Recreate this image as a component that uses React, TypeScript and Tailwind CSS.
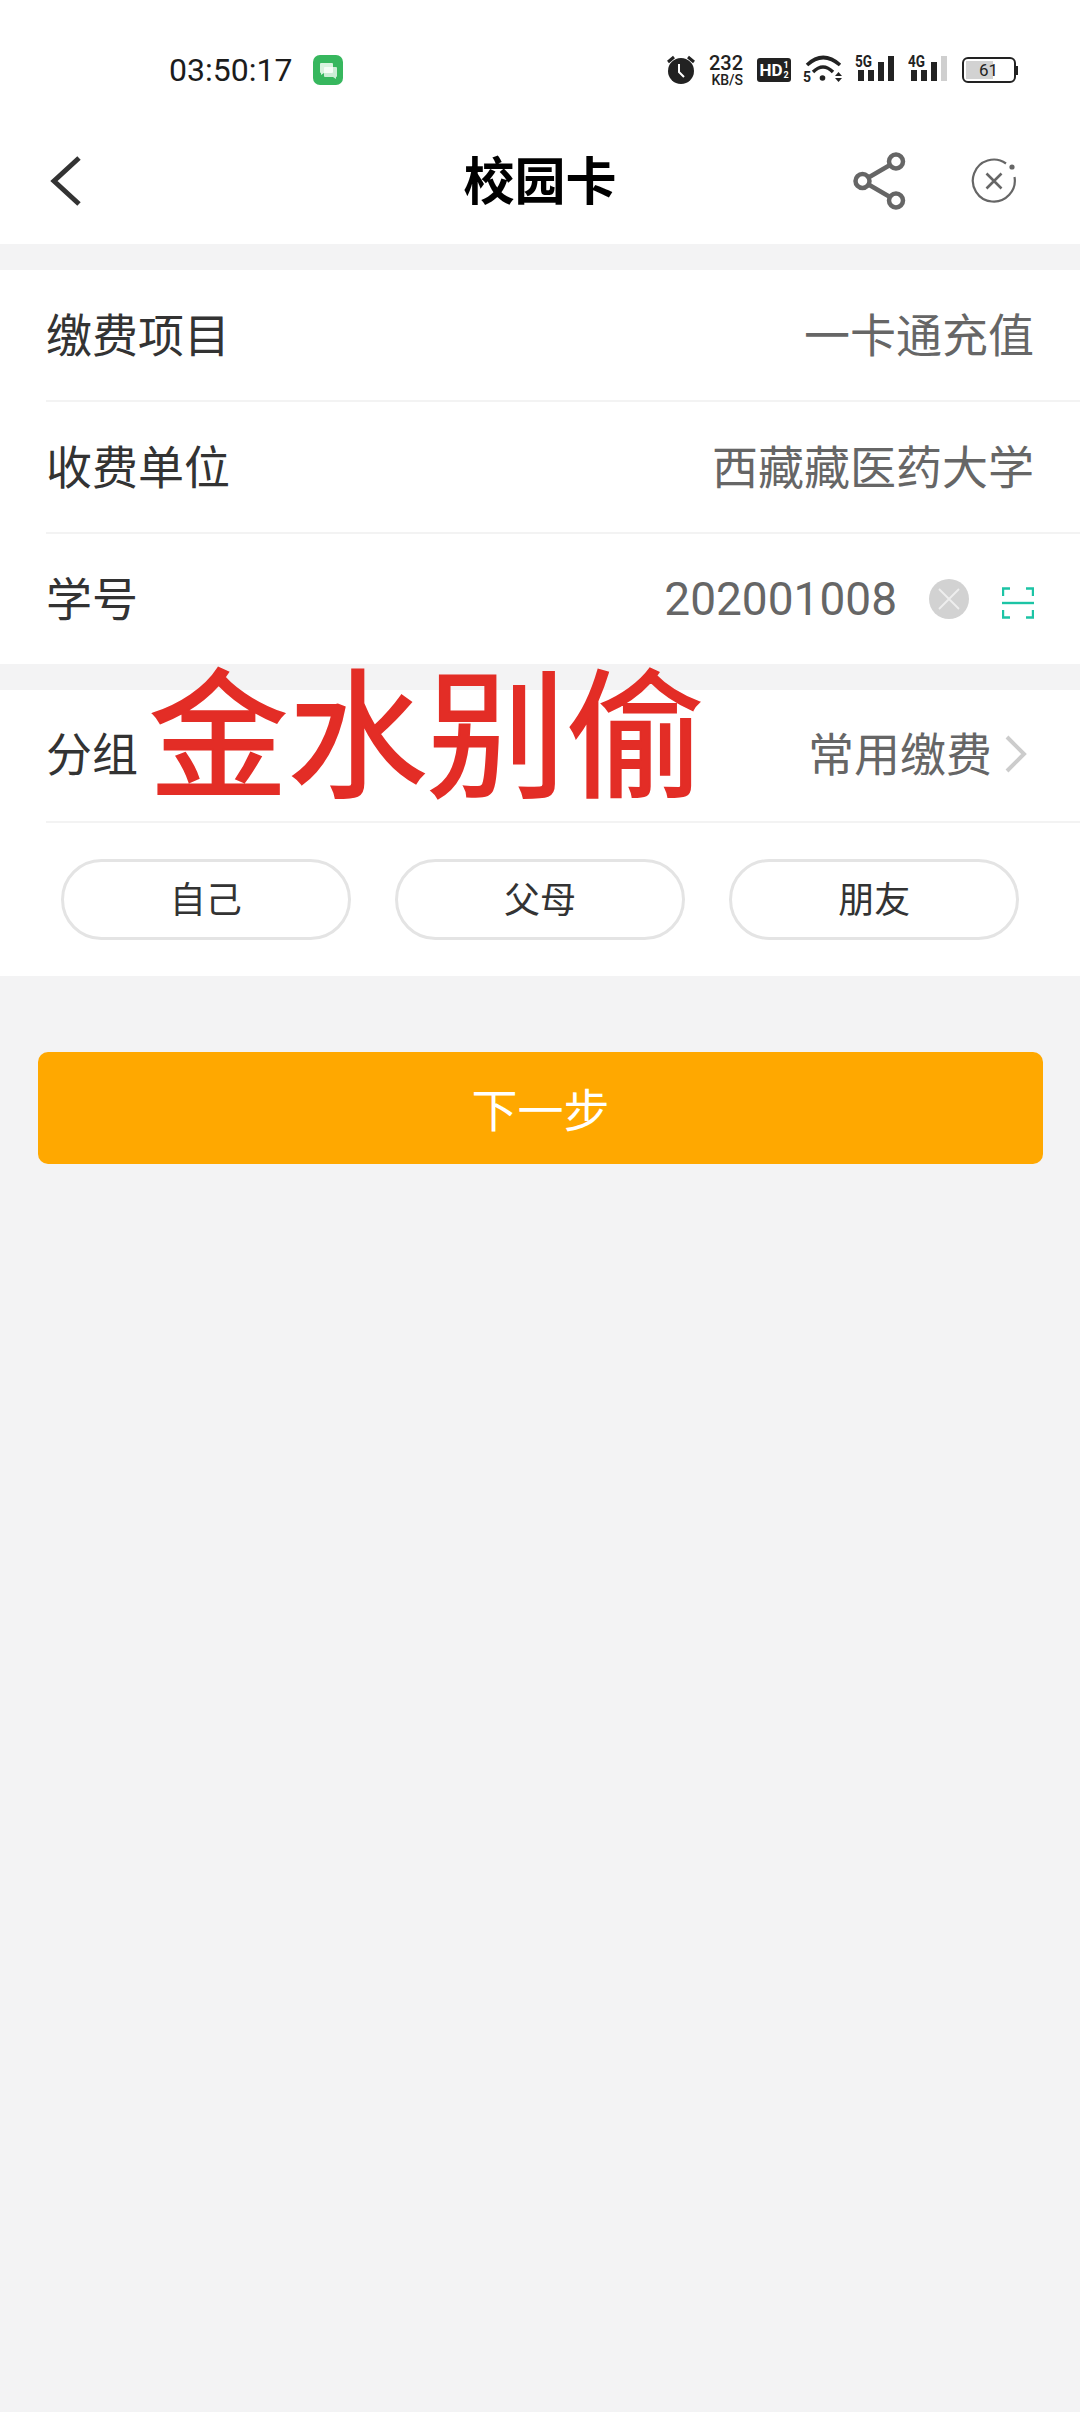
import React from 'react';

const cjk = "font-['Noto_Sans_CJK_SC','Noto_Sans',sans-serif]";

const Signal = ({ label, lastBar }: { label: string; lastBar: string }) => (
  <svg width="40" height="34" viewBox="0 -4 40 34" className="-mt-[4px] block">
    <text x="0" y="12" fontSize="16" fontWeight="700" fontFamily="Roboto, sans-serif" fill="#222" textLength="17" lengthAdjust="spacingAndGlyphs">
      {label}
    </text>
    <rect x="3" y="15" width="6" height="11" fill="#222" />
    <rect x="13" y="15" width="6" height="11" fill="#222" />
    <rect x="23" y="7" width="6" height="19" fill="#222" />
    <rect x="33" y="1" width="6" height="25" fill={lastBar} />
  </svg>
);

const StatusBar = () => (
  <div className="flex h-[120px] items-start bg-white pl-[169px] pr-[62px] pt-[50px]">
    <div className="flex h-[40px] items-center">
      <span className="font-['Roboto',sans-serif] text-[32px] leading-none text-[#1c1c1c]">03:50:17</span>
      <svg width="30" height="30" viewBox="0 0 30 30" className="ml-[21px]">
        <rect width="30" height="30" rx="7" fill="#37b75e" />
        <path d="M8 8h11a1 1 0 0 1 1 1v8a1 1 0 0 1-1 1h-8l-3 2v-2a1 1 0 0 1-1-1V9a1 1 0 0 1 1-1z" fill="#d9f3df" />
        <path d="M12 12h11a1 1 0 0 1 1 1v8a1 1 0 0 1-1 1v2l-3-2h-8a1 1 0 0 1-1-1v-8a1 1 0 0 1 1-1z" fill="#fff" opacity="0.75" />
      </svg>
    </div>
    <div className="ml-auto flex h-[40px] items-center">
      <svg width="28" height="30" viewBox="0 0 28 30">
        <path d="M1 7l6-5M27 7l-6-5" stroke="#222" strokeWidth="3" />
        <circle cx="14" cy="16" r="13" fill="#222" />
        <path d="M12 9v8l5 5" stroke="#fff" strokeWidth="2" fill="none" />
      </svg>
      <div className="ml-[11px] flex w-[37px] flex-col items-end font-['Roboto',sans-serif] font-medium text-[#222]">
        <span className="text-[20px] leading-[20px]">232</span>
        <span className="text-[14px] leading-[14px]">KB/S</span>
      </div>
      <div className="ml-[14px] flex h-[24px] w-[34px] items-center justify-center gap-[1px] rounded-[3px] bg-[#222] font-['Roboto',sans-serif] font-bold text-white">
        <span className="text-[17px] leading-none">HD</span>
        <span className="flex flex-col text-[9px] leading-[10px]">
          <span>1</span>
          <span>2</span>
        </span>
      </div>
      <svg width="40" height="32" viewBox="0 0 40 32" className="ml-[12px]">
        <path d="M4 11Q20 -4 37 11" stroke="#222" strokeWidth="3.6" fill="none" />
        <path d="M10 18Q20 8 30 18" stroke="#222" strokeWidth="3.4" fill="none" />
        <circle cx="19.5" cy="24" r="2.8" fill="#222" />
        <text x="0" y="28" fontSize="14" fontWeight="700" fontFamily="Roboto, sans-serif" fill="#222">5</text>
        <path d="M32 22l3.5-4 3.5 4zM32 24l3.5 4 3.5-4z" fill="#222" />
      </svg>
      <div className="ml-[12px]">
        <Signal label="5G" lastBar="#222" />
      </div>
      <div className="ml-[13px]">
        <Signal label="4G" lastBar="#cfcfcf" />
      </div>
      <div className="ml-[14px] flex items-center">
        <div className="flex h-[26px] w-[54px] items-center rounded-[6px] border-2 border-[#222] p-[2px]">
          <div className="flex h-full w-[27px] items-center justify-start bg-[#d2d2d2] pl-[13px]">
            <span className="font-['Roboto',sans-serif] text-[17px] leading-none text-[#222]">61</span>
          </div>
        </div>
        <div className="h-[9px] w-[2px] bg-[#222]" />
      </div>
    </div>
  </div>
);

const Header = () => (
  <div className="grid h-[124px] grid-cols-[1fr_auto_1fr] items-center bg-white pb-[2px]">
    <div className="pl-[48px]">
      <svg width="34" height="52" viewBox="0 0 34 52" className="block">
        <path d="M31 3L6 26l25 23" stroke="#333" strokeWidth="5" fill="none" />
      </svg>
    </div>
    <div className={`${cjk} pb-[5px] text-[51px] font-bold leading-none text-black`}>校园卡</div>
    <div className="flex items-center justify-end pr-[62px]">
      <svg width="54" height="58" viewBox="0 0 54 58" className="block">
        <circle cx="9.5" cy="29" r="7" stroke="#666" strokeWidth="4.5" fill="none" />
        <circle cx="43" cy="9.5" r="7" stroke="#666" strokeWidth="4.5" fill="none" />
        <circle cx="43" cy="48.5" r="7" stroke="#666" strokeWidth="4.5" fill="none" />
        <path d="M15.5 25.5L37 13M15.5 32.5L37 45" stroke="#666" strokeWidth="4.5" />
      </svg>
      <svg width="46" height="46" viewBox="0 0 46 46" className="ml-[64px] mr-[1px] block">
        <path d="M35 5.5A21 21 0 1 0 43.5 19" stroke="#666" strokeWidth="2.2" fill="none" />
        <circle cx="41" cy="9" r="2.6" fill="#666" />
        <path d="M15.5 15.5l15 15M30.5 15.5l-15 15" stroke="#666" strokeWidth="2.6" />
      </svg>
    </div>
  </div>
);

type RowProps = { label: string; rowClass: string; children: React.ReactNode };

const Row = ({ label, rowClass, children }: RowProps) => (
  <div className="pl-[46px]">
    <div className={`flex items-center justify-between pr-[46px] ${rowClass}`}>
      <span className={`${cjk} pb-[6px] text-[46px] leading-none text-[#333]`}>{label}</span>
      {children}
    </div>
  </div>
);

const Value = ({ children }: { children: React.ReactNode }) => (
  <span className={`${cjk} pb-[6px] text-[46px] leading-none text-[#666]`}>{children}</span>
);

const Chip = ({ label }: { label: string }) => (
  <div className={`${cjk} flex h-[81px] w-[290px] items-center justify-center rounded-full border-[3px] border-[#e4e4e4] pb-[5px] text-[36px] text-[#333]`}>
    {label}
  </div>
);

export default function App() {
  return (
    <div className="relative flex min-h-[2412px] flex-col bg-[#f3f3f4]">
      <StatusBar />
      <Header />

      <div className="mt-[26px] bg-white">
        <Row label="缴费项目" rowClass="h-[132px] border-b-2 border-[#f3f3f3]">
          <Value>一卡通充值</Value>
        </Row>
        <Row label="收费单位" rowClass="h-[132px] border-b-2 border-[#f3f3f3]">
          <Value>西藏藏医药大学</Value>
        </Row>
        <Row label="学号" rowClass="h-[130px]">
          <div className="flex items-center">
            <span className="font-['Roboto',sans-serif] text-[46px] leading-none text-[#666]">202001008</span>
            <svg width="40" height="40" viewBox="0 0 40 40" className="ml-[32px]">
              <circle cx="20" cy="20" r="20" fill="#d2d2d2" />
              <path d="M10 10l20 20M30 10L10 30" stroke="#eeeeee" strokeWidth="1.8" />
            </svg>
            <svg width="32" height="32" viewBox="0 0 32 32" className="ml-[33px] mt-[8px]">
              <path d="M1 9V1.5h7M24 1.5h7V9M1 23v7.5h7M24 30.5h7V23" stroke="#1cc4a5" strokeWidth="2.4" fill="none" />
              <path d="M0 16h32" stroke="#1cc4a5" strokeWidth="2.4" />
            </svg>
          </div>
        </Row>
      </div>

      <div className="mt-[26px] bg-white">
        <Row label="分组" rowClass="h-[133px] border-b-2 border-[#f3f3f3] pb-[4px]">
          <div className="flex items-center">
            <Value>常用缴费</Value>
            <svg width="22" height="38" viewBox="0 0 22 38" className="ml-[13px] mr-[7px]">
              <path d="M2 2l17 17L2 36" stroke="#cccccc" strokeWidth="4" fill="none" />
            </svg>
          </div>
        </Row>
        <div className="flex gap-[44.5px] px-[61px] pb-[36px] pt-[36px]">
          <Chip label="自己" />
          <Chip label="父母" />
          <Chip label="朋友" />
        </div>
      </div>

      <div className="pl-[38px] pr-[37px] pt-[76px]">
        <div className={`${cjk} flex h-[112px] items-center justify-center rounded-[10px] bg-[#ffa800] pb-[2px] text-[46px] text-white`}>
          下一步
        </div>
      </div>

      {/* watermark sits on top of the form */}
      <div className={`${cjk} absolute left-[149px] top-[636px] text-[139px] font-normal leading-[180px] text-[#e32d26] [-webkit-text-stroke:2px_#e32d26]`}>
        金水别偷
      </div>
    </div>
  );
}
